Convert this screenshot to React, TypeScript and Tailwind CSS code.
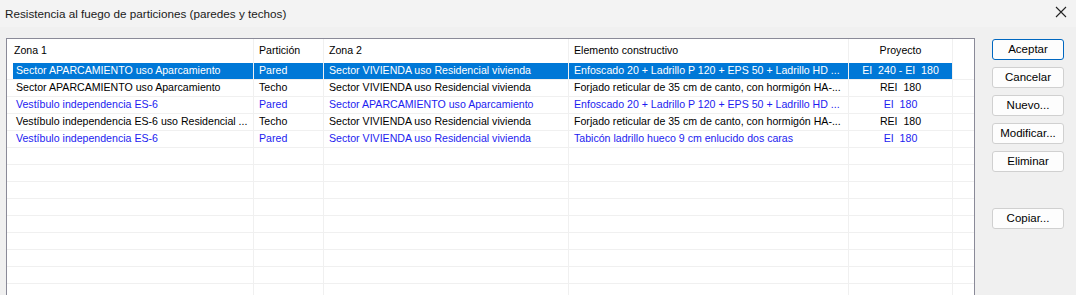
import React from 'react'

type Row = {
  zona1: string
  particion: string
  zona2: string
  elemento: string
  proyecto: string
  blue?: boolean
  selected?: boolean
}

const rows: Row[] = [
  {
    zona1: 'Sector APARCAMIENTO uso Aparcamiento',
    particion: 'Pared',
    zona2: 'Sector VIVIENDA uso Residencial vivienda',
    elemento: 'Enfoscado 20 + Ladrillo P 120 + EPS 50 + Ladrillo HD ...',
    proyecto: 'EI  240 - EI  180',
    selected: true,
  },
  {
    zona1: 'Sector APARCAMIENTO uso Aparcamiento',
    particion: 'Techo',
    zona2: 'Sector VIVIENDA uso Residencial vivienda',
    elemento: 'Forjado reticular de 35 cm de canto, con hormigón HA-...',
    proyecto: 'REI  180',
  },
  {
    zona1: 'Vestíbulo independencia ES-6',
    particion: 'Pared',
    zona2: 'Sector APARCAMIENTO uso Aparcamiento',
    elemento: 'Enfoscado 20 + Ladrillo P 120 + EPS 50 + Ladrillo HD ...',
    proyecto: 'EI  180',
    blue: true,
  },
  {
    zona1: 'Vestíbulo independencia ES-6 uso Residencial ...',
    particion: 'Techo',
    zona2: 'Sector VIVIENDA uso Residencial vivienda',
    elemento: 'Forjado reticular de 35 cm de canto, con hormigón HA-...',
    proyecto: 'REI  180',
  },
  {
    zona1: 'Vestíbulo independencia ES-6',
    particion: 'Pared',
    zona2: 'Sector VIVIENDA uso Residencial vivienda',
    elemento: 'Tabicón ladrillo hueco 9 cm enlucido dos caras',
    proyecto: 'EI  180',
    blue: true,
  },
]

const buttons = [
  { label: 'Aceptar', top: 'mt-0', primary: true },
  { label: 'Cancelar', top: 'mt-[7px]' },
  { label: 'Nuevo...', top: 'mt-[7px]' },
  { label: 'Modificar...', top: 'mt-[7px]' },
  { label: 'Eliminar', top: 'mt-[7px]' },
  { label: 'Copiar...', top: 'mt-[36px]' },
]

const cell = 'h-full shrink-0 border-r border-[#f0f0f0] whitespace-pre overflow-hidden flex items-center'

function ListRow({ row }: { row?: Row }) {
  const sel = row?.selected
  const color = sel ? 'text-white' : row?.blue ? 'text-[#1c1cf0]' : 'text-black'
  const bg = sel ? 'bg-[#0078d7]' : ''
  return (
    <div className={`flex h-[17px] border-b border-[#f0f0f0] ${color}`}>
      <div className={`${cell} w-[247px] pl-[6px]`}>
        <div className={`h-full w-full flex items-center pl-[3px] ${bg}`}>{row?.zona1}</div>
      </div>
      <div className={`${cell} w-[70px] pl-[5px] ${bg}`}>{row?.particion}</div>
      <div className={`${cell} w-[245px] pl-[5px] ${bg}`}>{row?.zona2}</div>
      <div className={`${cell} w-[280px] pl-[5px] ${bg}`}>{row?.elemento}</div>
      <div className={`${cell} w-[104px] justify-center ${bg}`}>{row?.proyecto}</div>
      <div className="flex-1" />
    </div>
  )
}

export default function App() {
  const empty = Array.from({ length: 12 })
  return (
    <div className="w-[1076px] h-[295px] overflow-hidden bg-[#f0f0f0] font-['Liberation_Sans',Arial,sans-serif] text-[10.6px] text-black">
      {/* Title bar */}
      <div className="h-[27px] flex items-center justify-between pl-[5px] pr-[9px] bg-[#f3f3f3]">
        <span className="text-[11.7px] text-[#1a1a1a]">Resistencia al fuego de particiones (paredes y techos)</span>
        <svg width="12" height="12" viewBox="0 0 12 12" className="mb-[3px]">
          <path d="M1 1 L11 11 M11 1 L1 11" stroke="#222" strokeWidth="1.1" />
        </svg>
      </div>

      <div className="flex pt-[11px]">
        {/* List view */}
        <div className="ml-[6px] w-[969px] h-[300px] border border-[#8a8a98] bg-white overflow-hidden">
          <div className="flex h-[24px] text-black">
            <div className={`${cell} w-[247px] pl-[7px]`}>Zona 1</div>
            <div className={`${cell} w-[70px] pl-[5px]`}>Partición</div>
            <div className={`${cell} w-[245px] pl-[5px]`}>Zona 2</div>
            <div className={`${cell} w-[280px] pl-[5px]`}>Elemento constructivo</div>
            <div className={`${cell} w-[104px] justify-center`}>Proyecto</div>
            <div className="flex-1" />
          </div>
          {rows.map((r, i) => (
            <ListRow key={i} row={r} />
          ))}
          {empty.map((_, i) => (
            <ListRow key={`e${i}`} />
          ))}
        </div>

        {/* Buttons */}
        <div className="ml-[17px] flex flex-col pt-[1px]">
          {buttons.map((b) => (
            <button
              key={b.label}
              className={`${b.top} w-[72px] h-[21px] rounded-[3px] bg-[#fdfdfd] text-[11.5px] text-black flex items-center justify-center border ${
                b.primary ? 'border-[#0067c0]' : 'border-[#d0d0d0]'
              }`}
            >
              {b.label}
            </button>
          ))}
        </div>
      </div>
    </div>
  )
}
